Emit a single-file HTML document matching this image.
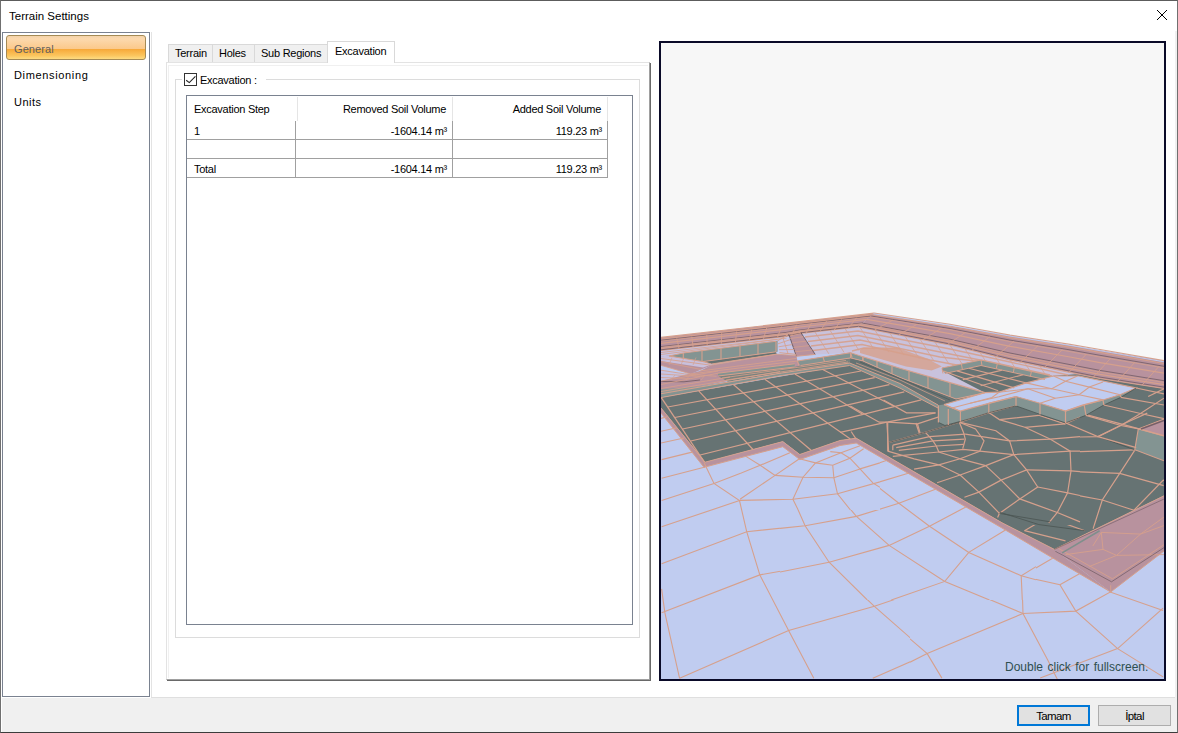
<!DOCTYPE html>
<html>
<head>
<meta charset="utf-8">
<title>Terrain Settings</title>
<style>
html,body{margin:0;padding:0;}
body{width:1178px;height:733px;overflow:hidden;background:#fff;font-family:"Liberation Sans",sans-serif;font-size:12px;color:#000;position:relative;}
.abs{position:absolute;}
#win{position:absolute;left:0;top:0;width:1176px;height:731px;border:1px solid #707070;border-top-color:#5c5c5c;border-bottom-color:#3c3c3c;background:#fff;}
#title{left:9px;top:8px;font-size:11.5px;line-height:16px;white-space:nowrap;}
#footer{left:2px;top:698px;width:1175px;height:34px;background:#f0f0f0;}
#leftpanel{left:2px;top:32px;width:146px;height:663px;border:1px solid #7a8290;background:#fff;}
#gen{left:6px;top:35px;width:138px;height:23px;border:1px solid #a58a55;border-radius:3px;background:linear-gradient(#f3d3aa 0%,#fcd9ae 12%,#fbc98a 56%,#f7a93a 58%,#fbc55e 85%,#fedc82 100%);}
.nav{font-size:11px;line-height:14px;white-space:nowrap;}
.tab{top:44px;height:18px;border:1px solid #d9d9d9;border-bottom:none;background:#f0f0f0;font-size:11px;letter-spacing:-0.25px;line-height:17px;white-space:nowrap;box-sizing:border-box;}
.btn{top:705px;height:21px;box-sizing:border-box;background:#e1e1e1;border:1px solid #adadad;text-align:center;line-height:21px;font-size:11.5px;letter-spacing:-0.6px;}
.cell{font-size:11px;letter-spacing:-0.27px;line-height:14px;white-space:nowrap;}
.hl{background:#e5e5e5;width:1px;top:97px;height:24px;}
.vl{background:#a0a0a0;width:1px;top:121px;height:57px;}
.gl{background:#a0a0a0;height:1px;left:187px;width:421px;}
.r{text-align:right;}
</style>
</head>
<body>
<div id="win"></div>
<div id="title" class="abs">Terrain Settings</div>
<svg class="abs" style="left:1156px;top:9px" width="12" height="12" viewBox="0 0 12 12"><path d="M1 1 L11 11 M11 1 L1 11" stroke="#000" stroke-width="1" fill="none"/></svg>

<div id="footer" class="abs"></div>
<div class="abs" style="left:151px;top:32px;width:1px;height:665px;background:#e3e3e3"></div>
<div class="abs" style="left:151px;top:697px;width:1024px;height:1px;background:#dfdfdf"></div>
<div class="abs" style="left:1175px;top:31px;width:2px;height:667px;background:#f0f0f0"></div>

<div id="leftpanel" class="abs"></div>
<div id="gen" class="abs"></div>
<div class="abs nav" style="left:14px;top:42px;color:#5f5f5f;letter-spacing:0.1px">General</div>
<div class="abs nav" style="left:14px;top:68px;letter-spacing:0.65px">Dimensioning</div>
<div class="abs nav" style="left:14px;top:95px;letter-spacing:0.5px">Units</div>

<!-- tab page -->
<div class="abs" style="left:166px;top:62px;width:484px;height:618px;box-sizing:border-box;border-top:1px solid #e3e3e3;border-left:1px solid #e3e3e3;border-right:1px solid #a0a0a0;border-bottom:1px solid #a0a0a0;box-shadow:1px 1px 0 #696969;background:#fff"></div>
<div class="abs" style="left:168px;top:65px;width:480px;height:613px;box-sizing:border-box;border-top:1px solid #f0f0f0;border-left:1px solid #f0f0f0;"></div>
<!-- tabs -->
<div class="abs tab" style="left:168px;width:45px;padding-left:6px;">Terrain</div>
<div class="abs tab" style="left:212px;width:43px;padding-left:6px;">Holes</div>
<div class="abs tab" style="left:254px;width:74px;padding-left:6px;">Sub Regions</div>
<div class="abs" style="left:327px;top:41px;width:68px;height:22px;box-sizing:border-box;border:1px solid #d9d9d9;border-bottom:none;background:#fff;line-height:19px;padding-left:7px;white-space:nowrap;font-size:11px;letter-spacing:-0.25px;">Excavation</div>

<!-- group box -->
<div class="abs" style="left:175px;top:79px;width:465px;height:559px;box-sizing:border-box;border:1px solid #dcdcdc;"></div>
<div class="abs" style="left:182px;top:72px;width:84px;height:16px;background:#fff"></div>
<div class="abs" style="left:184px;top:73px;width:13px;height:13px;box-sizing:border-box;border:1px solid #333;background:#fff"></div>
<svg class="abs" style="left:184px;top:73px" width="13" height="13" viewBox="0 0 13 13"><path d="M2.2 7.2 L5.3 9.6 L11.4 3.4" stroke="#222" stroke-width="1.1" fill="none"/></svg>
<div class="abs cell" style="left:200px;top:73px;">Excavation :</div>

<!-- list view -->
<div class="abs" style="left:186px;top:95px;width:447px;height:530px;box-sizing:border-box;border:1px solid #7a8290;background:#fff"></div>
<div id="lv">
<div class="abs hl" style="left:297px"></div><div class="abs hl" style="left:452px"></div><div class="abs hl" style="left:607px"></div>
<div class="abs vl" style="left:295px"></div><div class="abs vl" style="left:452px"></div><div class="abs vl" style="left:607px"></div>
<div class="abs gl" style="top:139px"></div><div class="abs gl" style="top:158px"></div><div class="abs gl" style="top:177px"></div>
<div class="abs cell" style="left:194px;top:102px">Excavation Step</div>
<div class="abs cell r" style="left:300px;width:146px;top:102px">Removed Soil Volume</div>
<div class="abs cell r" style="left:455px;width:146px;top:102px">Added Soil Volume</div>
<div class="abs cell" style="left:194px;top:124px">1</div>
<div class="abs cell r" style="left:300px;width:147px;top:124px">-1604.14 m³</div>
<div class="abs cell r" style="left:455px;width:147px;top:124px">119.23 m³</div>
<div class="abs cell" style="left:194px;top:162px">Total</div>
<div class="abs cell r" style="left:300px;width:147px;top:162px">-1604.14 m³</div>
<div class="abs cell r" style="left:455px;width:147px;top:162px">119.23 m³</div>
</div>

<!-- 3D view -->
<div class="abs" style="left:659px;top:41px;width:507px;height:640px;box-sizing:border-box;border:2px solid #0a0a28;background:#f7f7f7;" id="view"></div>
<!--SCENE--><svg class="abs" style="left:661px;top:43px" width="503" height="636" viewBox="661 43 503 636"><polygon points="661.0,337.4 874.0,313.2 1164.0,360.7 1164.0,679.0 661.0,679.0" fill="#c0ccf0"/><polygon points="661.0,337.4 874.0,313.2 858.0,327.0 800.0,333.5 786.5,336.4 661.0,350.5" fill="#b8929e"/><polygon points="874.0,313.2 1164.0,360.7 1164.0,388.5 1100.0,378.5 1070.0,372.5 1010.0,360.0 950.0,345.0 858.0,327.0" fill="#b8929e"/><polygon points="802.4,333.1 858.0,327.0 950.0,345.0 1010.0,360.0 1070.0,372.5 1079.0,376.0 1052.0,376.0 981.0,360.0 942.0,368.0 998.0,391.0 985.0,393.0 900.0,368.2 862.9,356.8 850.6,352.7 815.2,354.4" fill="#c9c2dc"/><polygon points="661.0,350.5 786.5,336.4 788.0,334.8 796.4,354.4 779.4,352.7 777.6,340.8 684.0,353.0 668.5,356.0 661.0,357.0" fill="#c6c4e4"/><polygon points="661.0,370.2 684.6,373.9 716.5,376.3 661.0,381.2" fill="#c6c4e4"/><polygon points="661.0,357.0 668.0,355.5 711.6,365.3 690.7,373.9 661.0,365.3" fill="#b8929e"/><polygon points="661.0,381.0 700.0,371.0 711.6,365.0 776.7,354.2 796.4,355.5 797.4,361.0 850.0,352.5 850.0,358.0 661.0,393.7" fill="#b8929e"/><polygon points="661.0,356.5 668.0,355.5 703.0,361.6 711.6,364.5 703.0,367.5 661.0,361.0" fill="#c9c0dc"/><polygon points="661.0,389.3 697.0,386.4 735.0,380.5 740.0,382.5 661.0,394.0" fill="#8e9a97"/><polyline points="661.0,381.5 684.0,381.8 700.0,380.0" fill="none" stroke="#5a4a50" stroke-width="0.9" opacity="0.7"/><polygon points="788.7,334.0 800.7,332.3 815.2,354.4 796.4,356.3" fill="#b8929e"/><polygon points="668.5,356.0 684.0,353.0 777.6,340.8 777.6,351.8 703.0,361.6" fill="#839492"/><polygon points="703.0,361.6 776.0,351.8 776.7,354.2 711.6,364.0" fill="#667373"/><polygon points="797.4,361.0 850.6,352.7 850.6,357.9 800.5,365.5" fill="#839492"/><polygon points="718.0,373.2 794.7,363.8 794.7,367.0 718.0,376.0" fill="#839492"/><polygon points="718.0,376.0 794.7,367.0 800.5,365.5 851.0,358.0 851.0,363.5 780.0,373.2 728.0,381.8" fill="#78837f"/><polyline points="722.0,378.0 846.0,360.5" fill="none" stroke="#d6a08c" stroke-width="1.0" opacity="0.8"/><polyline points="726.0,380.0 848.0,362.0" fill="none" stroke="#d6a08c" stroke-width="1.0" opacity="0.8"/><polygon points="860.0,350.0 863.0,348.0 901.0,349.0 926.5,358.2 941.8,366.4 931.6,370.5 906.0,366.4 860.0,353.0" fill="#d4a79c"/><polygon points="661.0,397.4 849.6,364.5 850.6,357.9 862.9,360.9 900.0,377.4 956.0,399.0 985.0,392.7 942.0,370.5 942.0,368.0 981.0,360.0 1052.0,376.0 1079.0,374.0 1100.0,378.5 1164.0,388.5 1164.0,495.8 1054.4,549.4 1002.0,522.8 856.2,438.2 840.0,440.5 799.8,454.5 782.8,441.6 705.0,462.2 661.0,408.0" fill="#667373"/><polygon points="661.0,393.7 780.0,373.2 847.5,363.0 849.6,363.0 849.6,365.5 780.0,375.8 661.0,397.6" fill="#839492"/><polygon points="850.6,352.7 862.9,356.8 862.9,360.9 850.6,357.9" fill="#839492"/><polygon points="862.9,356.8 900.0,368.2 984.9,392.7 956.0,399.0 900.0,377.4 862.9,360.9" fill="#839492"/><polygon points="849.6,363.0 900.0,383.5 938.0,405.0 938.0,408.0 900.0,388.1 849.6,365.5" fill="#839492"/><polygon points="942.0,368.0 981.0,360.0 981.0,365.5 945.0,373.5" fill="#839492"/><polygon points="981.0,360.0 1052.0,376.0 1045.0,379.5 981.0,365.5" fill="#839492"/><polygon points="944.0,404.5 984.9,392.7 999.0,392.2 1026.3,382.9 1053.5,376.0 1079.0,376.0 1136.2,388.0 1120.0,394.8 1103.0,400.0 1084.2,405.0 1065.5,411.0 1040.0,403.3 1016.0,396.5 988.8,403.3 970.0,408.4 960.4,411.2" fill="#c0ccf0"/><polygon points="938.4,405.3 944.0,404.5 960.4,411.2 960.4,421.4 945.0,425.5 938.4,422.4" fill="#839492"/><polygon points="960.4,411.2 970.0,408.4 988.8,403.3 1016.0,396.5 1016.0,405.9 988.8,412.7 970.0,418.7 960.4,421.4" fill="#839492"/><polygon points="1016.0,396.5 1040.0,403.3 1065.5,411.0 1065.5,422.9 1040.0,414.4 1016.0,405.9" fill="#839492"/><polygon points="1065.5,411.0 1084.2,405.0 1103.0,400.0 1120.0,394.8 1136.2,388.0 1120.9,397.3 1103.8,405.0 1086.0,415.3 1065.5,422.9" fill="#839492"/><polygon points="1138.3,428.9 1164.0,419.0 1164.0,436.0" fill="#b8929e"/><polygon points="1138.3,428.9 1164.0,436.0 1164.0,460.8 1134.8,449.7" fill="#839492"/><polygon points="1054.4,549.4 1164.0,495.8 1164.0,551.0 1110.7,592.0" fill="#b8929e"/><polygon points="661.0,408.0 705.0,462.2 782.8,441.6 799.8,454.5 840.0,440.5 856.2,438.2 1002.0,522.8 1054.4,549.4 1110.7,592.0 1110.7,592.0 1054.4,559.0 1002.0,528.0 856.2,443.0 840.0,445.5 799.8,459.5 782.8,446.7 704.0,467.3 661.0,413.0" fill="#b8929e"/><polyline points="661.0,408.0 705.0,462.2 782.8,441.6 799.8,454.5 840.0,440.5 856.2,438.2 1002.0,522.8 1054.4,549.4 1164.0,495.8" fill="none" stroke="#d6a08c" stroke-width="1"/><polyline points="661.0,413.0 704.0,467.3 782.8,446.7 799.8,459.5 840.0,445.5 856.2,443.0 1002.0,528.0 1054.4,559.0 1110.7,592.0" fill="none" stroke="#d6a08c" stroke-width="1"/><polyline points="667.7,407.0 861.0,371.0" fill="none" stroke="#d6a08c" stroke-width="1.2"/><polyline points="674.8,417.5 874.7,377.6" fill="none" stroke="#d6a08c" stroke-width="1.2"/><polyline points="682.6,429.0 889.4,384.6" fill="none" stroke="#d6a08c" stroke-width="1.2"/><polyline points="690.7,441.0 904.3,391.8" fill="none" stroke="#d6a08c" stroke-width="1.2"/><polyline points="700.1,455.0 921.2,399.9" fill="none" stroke="#d6a08c" stroke-width="1.2"/><polyline points="661.2,397.4 704.6,462.3" fill="none" stroke="#d6a08c" stroke-width="1.2"/><polyline points="698.7,390.9 753.0,449.5" fill="none" stroke="#d6a08c" stroke-width="1.2"/><polyline points="733.6,384.8 811.4,450.5" fill="none" stroke="#d6a08c" stroke-width="1.2"/><polyline points="764.8,379.3 850.4,439.0" fill="none" stroke="#d6a08c" stroke-width="1.2"/><polyline points="794.8,374.1 863.0,414.4" fill="none" stroke="#d6a08c" stroke-width="1.2"/><polyline points="822.2,369.3 894.5,406.5" fill="none" stroke="#d6a08c" stroke-width="1.2"/><clipPath id="cA"><path clip-rule="evenodd" d="M661,400H780V600H910V680H661Z M740,435H780V510H740Z"/></clipPath><clipPath id="cB"><rect x="1036" y="430" width="130" height="250"/><rect x="910" y="600" width="126" height="80"/></clipPath><clipPath id="cC"><path clip-rule="evenodd" d="M780,430H1036V600H780Z M780,435H880V510H780Z"/></clipPath><clipPath id="cN"><rect x="740" y="435" width="140" height="75"/></clipPath><g clip-path="url(#cN)"><polyline points="799.4,458.8 815.5,462.9 832.7,465.3 849.9,458.2 863.6,448.7" fill="none" stroke="#d6a08c" stroke-width="1.1"/><polyline points="860.0,468.9 880.0,462.9" fill="none" stroke="#d6a08c" stroke-width="1.1"/><polyline points="815.5,462.9 830.3,457.0 841.0,452.8 860.0,445.7" fill="none" stroke="#d6a08c" stroke-width="1.1"/><polyline points="830.3,451.6 841.0,452.8 849.9,458.2 860.0,468.9 873.1,483.1 880.0,487.3" fill="none" stroke="#d6a08c" stroke-width="1.1"/><polyline points="799.4,458.8 775.1,475.4 740.0,499.2" fill="none" stroke="#d6a08c" stroke-width="1.1"/><polyline points="745.9,456.4 760.2,465.3 775.1,475.4 803.0,477.2 833.9,477.8 860.0,468.9" fill="none" stroke="#d6a08c" stroke-width="1.1"/><polyline points="760.2,465.3 789.9,452.8" fill="none" stroke="#d6a08c" stroke-width="1.1"/><polyline points="740.0,473.6 760.2,465.3" fill="none" stroke="#d6a08c" stroke-width="1.1"/><polyline points="815.5,462.9 803.0,477.2 792.9,499.2 798.2,510.0" fill="none" stroke="#d6a08c" stroke-width="1.1"/><polyline points="832.7,465.3 833.9,477.8 837.5,493.8 850.5,510.0" fill="none" stroke="#d6a08c" stroke-width="1.1"/><polyline points="740.0,500.4 792.9,499.2 837.5,493.8 880.0,481.9" fill="none" stroke="#d6a08c" stroke-width="1.1"/><polyline points="714.0,483.5 739.5,500.6 746.7,531.7" fill="none" stroke="#d6a08c" stroke-width="1.1"/></g><g clip-path="url(#cA)"><polyline points="661.6,459.6 691.1,452.4 692.6,452.1" fill="none" stroke="#d6a08c" stroke-width="1.1"/><polyline points="661.0,418.4 667.0,416.7" fill="none" stroke="#d6a08c" stroke-width="1.1"/><polyline points="661.0,431.2 677.0,427.7" fill="none" stroke="#d6a08c" stroke-width="1.1"/><polyline points="661.0,443.0 684.0,438.0" fill="none" stroke="#d6a08c" stroke-width="1.1"/><polyline points="661.6,478.3 704.2,467.2 704.8,467.0" fill="none" stroke="#d6a08c" stroke-width="1.1"/><polyline points="661.6,500.6 714.0,483.5 754.9,467.8 786.0,453.7 789.9,452.0" fill="none" stroke="#d6a08c" stroke-width="1.1"/><polyline points="661.6,526.7 739.5,500.6 774.6,474.4 800.8,458.7" fill="none" stroke="#d6a08c" stroke-width="1.1"/><polyline points="739.5,500.6 793.6,498.9 838.4,494.0 885.9,480.9 916.0,471.1" fill="none" stroke="#d6a08c" stroke-width="1.1"/><polyline points="661.6,563.7 746.7,531.7 804.0,525.8 856.4,515.9 902.2,502.2 916.0,497.3" fill="none" stroke="#d6a08c" stroke-width="1.1"/><polyline points="661.6,612.8 759.8,574.9 828.6,562.7 889.1,544.7 916.0,534.9" fill="none" stroke="#d6a08c" stroke-width="1.1"/><polyline points="679.6,678.3 788.6,630.5 874.4,606.3 916.0,592.2" fill="none" stroke="#d6a08c" stroke-width="1.1"/><polyline points="872.8,678.3 916.0,659.3" fill="none" stroke="#d6a08c" stroke-width="1.1"/><polyline points="661.6,588.9 664.9,612.8 679.6,678.3" fill="none" stroke="#d6a08c" stroke-width="1.1"/><polyline points="704.2,462.9 714.0,483.5 739.5,500.6 746.7,531.7 759.8,574.9 788.6,630.5 813.8,678.3" fill="none" stroke="#d6a08c" stroke-width="1.1"/><polyline points="746.7,456.4 774.6,474.4 803.0,477.6 832.5,477.6 859.7,467.8 885.9,456.4" fill="none" stroke="#d6a08c" stroke-width="1.1"/><polyline points="830.2,451.5 815.5,462.9 803.0,477.6 793.6,498.9 804.0,525.8 828.6,562.7 874.4,606.3 916.0,642.9" fill="none" stroke="#d6a08c" stroke-width="1.1"/><polyline points="856.4,444.9 833.5,464.5 832.5,477.6 838.4,494.0 856.4,515.9 889.1,544.7 916.0,566.0" fill="none" stroke="#d6a08c" stroke-width="1.1"/><polyline points="815.5,462.9 833.5,464.5 849.9,458.0" fill="none" stroke="#d6a08c" stroke-width="1.1"/><polyline points="860.3,469.5 900.6,500.6 916.0,513.6" fill="none" stroke="#d6a08c" stroke-width="1.1"/></g><g clip-path="url(#cB)"><polyline points="910.0,511.1 929.7,525.8 969.0,552.1 1021.8,576.2 1059.9,584.8 1075.8,611.1 1117.6,648.6 1163.1,676.9" fill="none" stroke="#d6a08c" stroke-width="1.1"/><polyline points="910.0,535.6 929.7,525.8 964.1,508.6 970.2,504.9" fill="none" stroke="#d6a08c" stroke-width="1.1"/><polyline points="969.0,552.1 1003.4,531.9" fill="none" stroke="#d6a08c" stroke-width="1.1"/><polyline points="910.0,557.7 945.6,581.1 969.0,552.1" fill="none" stroke="#d6a08c" stroke-width="1.1"/><polyline points="910.0,593.4 945.6,581.1 1023.0,613.5 1075.8,611.1 1110.2,592.1 1163.1,610.6" fill="none" stroke="#d6a08c" stroke-width="1.1"/><polyline points="1021.8,576.2 1051.3,559.0 1052.8,558.1" fill="none" stroke="#d6a08c" stroke-width="1.1"/><polyline points="1021.8,576.2 1023.0,613.5 1047.6,659.7 1057.4,679.4" fill="none" stroke="#d6a08c" stroke-width="1.1"/><polyline points="1059.9,584.8 1079.5,573.7" fill="none" stroke="#d6a08c" stroke-width="1.1"/><polyline points="1117.6,648.6 1163.1,608.1" fill="none" stroke="#d6a08c" stroke-width="1.1"/><polyline points="910.0,662.2 927.2,653.6 1023.0,613.5" fill="none" stroke="#d6a08c" stroke-width="1.1"/><polyline points="910.0,638.8 927.2,653.6 941.9,678.1" fill="none" stroke="#d6a08c" stroke-width="1.1"/><polyline points="1117.6,648.6 1040.2,678.1" fill="none" stroke="#d6a08c" stroke-width="1.1"/></g><g clip-path="url(#cC)"><polyline points="780.0,476.0 802.9,477.1 833.5,478.2 860.8,469.5 882.6,461.8 886.3,460.5" fill="none" stroke="#d6a08c" stroke-width="1.1"/><polyline points="780.0,498.9 793.1,498.5 837.2,493.5 873.8,483.6 906.6,473.8 908.2,473.3" fill="none" stroke="#d6a08c" stroke-width="1.1"/><polyline points="780.0,528.4 805.1,525.8 856.4,516.4 898.9,503.3 932.8,490.2 935.4,489.2" fill="none" stroke="#d6a08c" stroke-width="1.1"/><polyline points="780.0,572.0 829.1,562.2 889.1,545.4 929.5,526.2 964.4,507.7 965.8,506.9" fill="none" stroke="#d6a08c" stroke-width="1.1"/><polyline points="891.3,600.0 944.8,581.4 968.8,552.4 1002.6,531.7 1005.4,530.0" fill="none" stroke="#d6a08c" stroke-width="1.1"/><polyline points="1036.0,566.6 1021.2,575.7 1022.3,600.0" fill="none" stroke="#d6a08c" stroke-width="1.1"/><polyline points="799.6,458.6 816.0,462.9 802.9,477.1 793.1,498.5 805.1,525.8 829.1,562.2 867.3,600.0" fill="none" stroke="#d6a08c" stroke-width="1.1"/><polyline points="834.6,453.1 833.5,465.8 833.5,478.2 837.2,493.5 856.4,516.4 889.1,545.4 944.8,581.4 989.5,600.0" fill="none" stroke="#d6a08c" stroke-width="1.1"/><polyline points="858.6,448.7 852.0,457.5 860.8,469.5 873.8,483.6 898.9,503.3 929.5,526.2 968.8,552.4 1021.2,575.7 1036.0,579.7" fill="none" stroke="#d6a08c" stroke-width="1.1"/><polyline points="816.0,462.9 833.5,465.8 852.0,457.5" fill="none" stroke="#d6a08c" stroke-width="1.1"/><polyline points="780.0,470.6 799.6,458.6" fill="none" stroke="#d6a08c" stroke-width="1.1"/><polyline points="816.0,462.9 826.9,454.2" fill="none" stroke="#d6a08c" stroke-width="1.1"/></g><polyline points="888.5,442.6 925.2,432.4 959.3,422.2" fill="none" stroke="#d6a08c" stroke-width="1.2"/><polyline points="892.8,445.2 929.4,436.7 965.3,434.1" fill="none" stroke="#d6a08c" stroke-width="1.2"/><polyline points="896.2,447.7 932.9,440.9 964.4,439.2" fill="none" stroke="#d6a08c" stroke-width="1.2"/><polyline points="898.8,450.3 936.3,446.0 963.5,444.3" fill="none" stroke="#d6a08c" stroke-width="1.2"/><polyline points="892.8,456.3 938.8,452.0 963.5,449.4 979.7,451.2 1013.8,454.6 1070.1,451.2 1080.0,451.2" fill="none" stroke="#d6a08c" stroke-width="1.2"/><polyline points="959.3,422.2 963.5,432.4 965.3,439.2 963.5,446.0 962.7,448.6" fill="none" stroke="#d6a08c" stroke-width="1.2"/><polyline points="959.3,422.2 975.5,429.0 984.0,440.9 979.7,451.2 960.1,458.8 938.8,464.8 914.1,469.1" fill="none" stroke="#d6a08c" stroke-width="1.2"/><polyline points="959.3,422.2 995.9,430.7 1009.6,440.9 1013.8,454.6 985.7,465.6 960.1,475.0 937.1,482.7" fill="none" stroke="#d6a08c" stroke-width="1.2"/><polyline points="959.3,422.2 989.1,412.8 1014.7,406.0" fill="none" stroke="#d6a08c" stroke-width="1.2"/><polyline points="989.1,412.8 999.4,419.6 1024.9,427.3 1050.5,439.2 1070.1,451.2 1071.0,470.8 1067.6,492.9 1057.3,512.5 1048.8,522.8" fill="none" stroke="#d6a08c" stroke-width="1.2"/><polyline points="999.4,419.6 1038.6,415.3 1065.0,423.9" fill="none" stroke="#d6a08c" stroke-width="1.2"/><polyline points="1024.9,427.3 1065.0,423.9 1080.0,417.1" fill="none" stroke="#d6a08c" stroke-width="1.2"/><polyline points="965.3,434.1 1009.6,440.9 1050.5,439.2 1080.0,436.7" fill="none" stroke="#d6a08c" stroke-width="1.2"/><polyline points="1013.8,454.6 1026.6,469.9 1037.7,487.0 1019.8,498.9 999.4,513.4 997.6,517.6" fill="none" stroke="#d6a08c" stroke-width="1.2"/><polyline points="1026.6,469.9 1071.0,470.8 1080.0,471.6" fill="none" stroke="#d6a08c" stroke-width="1.2"/><polyline points="1037.7,487.0 1067.6,492.9 1080.0,495.5" fill="none" stroke="#d6a08c" stroke-width="1.2"/><polyline points="985.7,465.6 1001.1,480.1 1019.8,498.9 1057.3,512.5 1080.0,521.9" fill="none" stroke="#d6a08c" stroke-width="1.2"/><polyline points="960.1,475.0 978.9,492.1 999.4,513.4" fill="none" stroke="#d6a08c" stroke-width="1.2"/><polyline points="1026.6,469.9 1001.1,480.1 978.9,492.1 964.4,497.2" fill="none" stroke="#d6a08c" stroke-width="1.2"/><polyline points="960.1,458.8 985.7,465.6" fill="none" stroke="#d6a08c" stroke-width="1.2"/><polyline points="887.7,451.2 914.1,458.8 938.8,464.8 960.1,475.0" fill="none" stroke="#d6a08c" stroke-width="1.2"/><polyline points="925.2,432.4 929.4,436.7 932.9,440.9 936.3,446.0 938.8,452.0 960.1,458.8" fill="none" stroke="#d6a08c" stroke-width="1.2"/><polyline points="887.7,422.2 917.5,423.9 938.0,417.1" fill="none" stroke="#d6a08c" stroke-width="1.2"/><polyline points="917.5,423.9 920.1,433.2" fill="none" stroke="#d6a08c" stroke-width="1.2"/><polyline points="887.7,422.2 887.7,451.2" fill="none" stroke="#d6a08c" stroke-width="1.2"/><polyline points="892.8,445.2 892.8,450.3" fill="none" stroke="#d6a08c" stroke-width="1.2"/><polyline points="888.5,442.6 925.2,432.4 959.3,422.2" fill="none" stroke="#4a5452" stroke-width="0.8"/><polyline points="999.4,513.4 1050.5,521.9" fill="none" stroke="#4a5452" stroke-width="0.8"/><clipPath id="cE"><rect x="1080" y="400" width="90" height="160"/><rect x="1000" y="525" width="80" height="40"/></clipPath><g clip-path="url(#cE)"><polyline points="1051.1,437.6 1071.6,451.9 1068.5,493.9 1050.1,518.4 1038.9,524.6" fill="none" stroke="#d6a08c" stroke-width="1.2"/><polyline points="1050.1,437.6 1098.2,436.6 1122.7,424.3 1147.3,413.1" fill="none" stroke="#d6a08c" stroke-width="1.2"/><polyline points="1011.3,448.9 1026.6,469.3 1037.8,486.7 1019.4,499.0 1000.0,512.3" fill="none" stroke="#d6a08c" stroke-width="1.2"/><polyline points="1071.6,451.9 1134.0,449.9" fill="none" stroke="#d6a08c" stroke-width="1.2"/><polyline points="1070.6,471.4 1119.7,473.4 1163.7,485.7" fill="none" stroke="#d6a08c" stroke-width="1.2"/><polyline points="1037.8,486.7 1068.5,493.9 1102.3,500.0 1134.0,510.2" fill="none" stroke="#d6a08c" stroke-width="1.2"/><polyline points="1135.0,449.9 1119.7,473.4 1102.3,500.0 1093.1,528.7" fill="none" stroke="#d6a08c" stroke-width="1.2"/><polyline points="1019.4,499.0 1050.1,518.4 1084.9,530.7" fill="none" stroke="#d6a08c" stroke-width="1.2"/><polyline points="1000.0,480.6 1019.4,499.0" fill="none" stroke="#d6a08c" stroke-width="1.2"/><polyline points="1088.0,415.1 1122.7,424.3 1163.7,435.6" fill="none" stroke="#d6a08c" stroke-width="1.2"/><polyline points="1163.7,479.6 1134.0,510.2" fill="none" stroke="#d6a08c" stroke-width="1.2"/><polyline points="1024.5,530.7 1065.5,540.9" fill="none" stroke="#d6a08c" stroke-width="1.2"/><polyline points="1024.5,530.7 1041.9,520.5" fill="none" stroke="#d6a08c" stroke-width="1.2"/></g><polyline points="1000.0,512.3 1038.9,524.6 1084.9,530.7" fill="none" stroke="#4a5452" stroke-width="0.8"/><polyline points="1065.5,423.3 1098.2,436.6 1135.0,449.9" fill="none" stroke="#4a5452" stroke-width="0.8"/><polyline points="840.0,432.4 886.9,422.2 935.5,412.8" fill="none" stroke="#d6a08c" stroke-width="1.2"/><polyline points="886.9,422.2 888.6,451.2" fill="none" stroke="#d6a08c" stroke-width="1.2"/><polyline points="850.2,406.0 879.2,422.2 886.9,422.2" fill="none" stroke="#d6a08c" stroke-width="1.2"/><polyline points="883.5,400.0 906.5,412.8 935.5,412.8" fill="none" stroke="#d6a08c" stroke-width="1.2"/><polyline points="851.1,431.5 856.2,439.2" fill="none" stroke="#d6a08c" stroke-width="1.2"/><polyline points="915.9,423.0 919.3,433.2" fill="none" stroke="#d6a08c" stroke-width="1.2"/><polyline points="661.0,337.4 786.5,323.2 800.0,321.7 874.0,313.2" fill="none" stroke="#d6a08c" stroke-width="1.2"/><polyline points="661.0,339.0 786.5,324.8 800.0,323.1 872.1,314.9" fill="none" stroke="#d6a08c" stroke-width="1.2"/><polyline points="661.0,343.3 786.5,329.1 800.0,327.0 866.8,319.4" fill="none" stroke="#d6a08c" stroke-width="1.2"/><polyline points="661.0,348.5 786.5,334.4 800.0,331.7 860.4,324.9" fill="none" stroke="#d6a08c" stroke-width="1.2"/><polyline points="661.0,350.5 786.5,336.4 800.0,333.5 858.0,327.0" fill="none" stroke="#d6a08c" stroke-width="1.2"/><polyline points="661.0,340.3 786.5,326.1 800.0,324.3 870.5,316.2" fill="none" stroke="#5a4a50" stroke-width="0.8" opacity="0.75"/><polyline points="661.0,346.6 786.5,332.4 800.0,330.0 862.8,322.9" fill="none" stroke="#5a4a50" stroke-width="0.8" opacity="0.75"/><polyline points="661.0,349.8 786.5,335.7 800.0,332.9 858.8,326.3" fill="none" stroke="#5a4a50" stroke-width="0.8" opacity="0.75"/><polyline points="661.0,341.1 786.5,326.9 800.0,325.0 869.5,317.1" fill="none" stroke="#d6a08c" stroke-width="1.0" opacity="0.8"/><polyline points="661.0,347.4 786.5,333.2 800.0,330.7 861.8,323.7" fill="none" stroke="#d6a08c" stroke-width="1.0" opacity="0.8"/><polyline points="676.8,338.3 679.1,348.8" fill="none" stroke="#d6a08c" stroke-width="1.0" opacity="0.85"/><polyline points="691.8,336.6 693.1,347.1" fill="none" stroke="#d6a08c" stroke-width="1.0" opacity="0.85"/><polyline points="706.8,334.9 707.2,345.5" fill="none" stroke="#d6a08c" stroke-width="1.0" opacity="0.85"/><polyline points="721.7,333.1 721.3,343.8" fill="none" stroke="#d6a08c" stroke-width="1.0" opacity="0.85"/><polyline points="736.7,331.4 735.4,342.1" fill="none" stroke="#d6a08c" stroke-width="1.0" opacity="0.85"/><polyline points="751.7,329.7 749.4,340.4" fill="none" stroke="#d6a08c" stroke-width="1.0" opacity="0.85"/><polyline points="766.7,328.0 763.5,338.8" fill="none" stroke="#d6a08c" stroke-width="1.0" opacity="0.85"/><polyline points="781.7,326.3 777.6,337.1" fill="none" stroke="#d6a08c" stroke-width="1.0" opacity="0.85"/><polyline points="796.7,324.6 791.6,335.4" fill="none" stroke="#d6a08c" stroke-width="1.0" opacity="0.85"/><polyline points="811.7,322.8 805.7,333.7" fill="none" stroke="#d6a08c" stroke-width="1.0" opacity="0.85"/><polyline points="826.6,321.1 819.8,332.0" fill="none" stroke="#d6a08c" stroke-width="1.0" opacity="0.85"/><polyline points="841.6,319.4 833.9,330.4" fill="none" stroke="#d6a08c" stroke-width="1.0" opacity="0.85"/><polyline points="856.6,317.7 847.9,328.7" fill="none" stroke="#d6a08c" stroke-width="1.0" opacity="0.85"/><polyline points="874.0,313.2 950.0,324.4 1010.0,335.1 1070.0,344.3 1100.0,349.5 1164.0,360.7" fill="none" stroke="#d6a08c" stroke-width="1.2"/><polyline points="872.4,314.6 950.0,326.5 1010.0,337.6 1070.0,347.1 1100.0,352.4 1164.0,363.5" fill="none" stroke="#d6a08c" stroke-width="1.2"/><polyline points="866.8,319.4 950.0,333.7 1010.0,346.3 1070.0,357.0 1100.0,362.6 1164.0,373.2" fill="none" stroke="#d6a08c" stroke-width="1.2"/><polyline points="860.2,325.1 950.0,342.1 1010.0,356.5 1070.0,368.6 1100.0,374.4 1164.0,384.6" fill="none" stroke="#d6a08c" stroke-width="1.2"/><polyline points="858.0,327.0 950.0,345.0 1010.0,360.0 1070.0,372.5 1100.0,378.5 1164.0,388.5" fill="none" stroke="#d6a08c" stroke-width="1.2"/><polyline points="870.8,316.0 950.0,328.5 1010.0,340.1 1070.0,349.9 1100.0,355.3 1164.0,366.3" fill="none" stroke="#5a4a50" stroke-width="0.8" opacity="0.75"/><polyline points="862.5,323.1 950.0,339.2 1010.0,353.0 1070.0,364.6 1100.0,370.4 1164.0,380.7" fill="none" stroke="#5a4a50" stroke-width="0.8" opacity="0.75"/><polyline points="858.8,326.3 950.0,344.0 1010.0,358.8 1070.0,371.1 1100.0,377.1 1164.0,387.1" fill="none" stroke="#5a4a50" stroke-width="0.8" opacity="0.75"/><polyline points="869.8,316.8 950.0,329.8 1010.0,341.6 1070.0,351.6 1100.0,357.0 1164.0,367.9" fill="none" stroke="#d6a08c" stroke-width="1.0" opacity="0.8"/><polyline points="861.5,324.0 950.0,340.5 1010.0,354.5 1070.0,366.3 1100.0,372.1 1164.0,382.4" fill="none" stroke="#d6a08c" stroke-width="1.0" opacity="0.8"/><polyline points="873.4,313.8 950.0,325.2 1010.0,336.1 1070.0,345.4 1100.0,350.7 1164.0,361.8" fill="none" stroke="#c0ccf0" stroke-width="1.0" opacity="0.9"/><polyline points="892.9,320.0 874.3,330.2" fill="none" stroke="#d6a08c" stroke-width="1.0" opacity="0.85"/><polyline points="917.1,324.2 898.7,335.0" fill="none" stroke="#d6a08c" stroke-width="1.0" opacity="0.85"/><polyline points="941.3,328.3 923.0,339.7" fill="none" stroke="#d6a08c" stroke-width="1.0" opacity="0.85"/><polyline points="965.5,332.4 947.3,344.5" fill="none" stroke="#d6a08c" stroke-width="1.0" opacity="0.85"/><polyline points="989.7,336.8 971.7,350.4" fill="none" stroke="#d6a08c" stroke-width="1.0" opacity="0.85"/><polyline points="1013.9,341.3 996.0,356.5" fill="none" stroke="#d6a08c" stroke-width="1.0" opacity="0.85"/><polyline points="1038.1,345.6 1020.3,362.2" fill="none" stroke="#d6a08c" stroke-width="1.0" opacity="0.85"/><polyline points="1062.3,349.8 1044.7,367.2" fill="none" stroke="#d6a08c" stroke-width="1.0" opacity="0.85"/><polyline points="1086.5,354.0 1069.0,372.3" fill="none" stroke="#d6a08c" stroke-width="1.0" opacity="0.85"/><polyline points="1110.8,358.1 1093.3,377.2" fill="none" stroke="#d6a08c" stroke-width="1.0" opacity="0.85"/><polyline points="1135.0,362.1 1117.7,381.3" fill="none" stroke="#d6a08c" stroke-width="1.0" opacity="0.85"/><polyline points="1159.2,366.1 1142.0,385.1" fill="none" stroke="#d6a08c" stroke-width="1.0" opacity="0.85"/><clipPath id="cM"><polygon points="802.4,333.1 858.0,327.0 950.0,345.0 1010.0,360.0 1070.0,372.5 1079.0,376.0 1052.0,376.0 981.0,360.0 942.0,368.0 935.5,370.6 913.3,368.1 900.0,368.2 862.9,356.8 850.6,352.7 815.2,354.4"/></clipPath><g clip-path="url(#cM)"><polyline points="805.0,337.0 858.0,331.0 950.0,349.0 1010.0,362.0 1068.0,375.0" fill="none" stroke="#d6a08c" stroke-width="1.3" opacity="0.9"/><polyline points="808.0,341.5 858.0,335.5 945.0,353.0 1000.0,364.0 1050.0,375.0" fill="none" stroke="#d6a08c" stroke-width="1.3" opacity="0.9"/><polyline points="811.0,346.0 860.0,340.0 940.0,357.0 985.0,362.0" fill="none" stroke="#d6a08c" stroke-width="1.3" opacity="0.9"/><polyline points="813.0,350.5 862.0,344.5 930.0,360.0 962.0,366.0" fill="none" stroke="#d6a08c" stroke-width="1.3" opacity="0.9"/><polyline points="852.0,351.0 864.0,348.0 900.0,348.5" fill="none" stroke="#d6a08c" stroke-width="1.3" opacity="0.9"/><polyline points="815.0,332.1 829.0,354.1" fill="none" stroke="#d6a08c" stroke-width="1.0" opacity="0.75"/><polyline points="830.0,330.3 844.0,352.3" fill="none" stroke="#d6a08c" stroke-width="1.0" opacity="0.75"/><polyline points="845.0,328.5 859.0,350.5" fill="none" stroke="#d6a08c" stroke-width="1.0" opacity="0.75"/><polyline points="860.0,327.4 874.0,349.4" fill="none" stroke="#d6a08c" stroke-width="1.0" opacity="0.75"/><polyline points="875.0,330.3 889.0,352.3" fill="none" stroke="#d6a08c" stroke-width="1.0" opacity="0.75"/><polyline points="890.0,333.3 904.0,355.3" fill="none" stroke="#d6a08c" stroke-width="1.0" opacity="0.75"/><polyline points="905.0,336.2 919.0,358.2" fill="none" stroke="#d6a08c" stroke-width="1.0" opacity="0.75"/><polyline points="920.0,339.1 934.0,361.1" fill="none" stroke="#d6a08c" stroke-width="1.0" opacity="0.75"/><polyline points="935.0,342.1 949.0,364.1" fill="none" stroke="#d6a08c" stroke-width="1.0" opacity="0.75"/><polyline points="950.0,345.0 964.0,367.0" fill="none" stroke="#d6a08c" stroke-width="1.0" opacity="0.75"/><polyline points="965.0,348.8 979.0,370.8" fill="none" stroke="#d6a08c" stroke-width="1.0" opacity="0.75"/><polyline points="980.0,352.5 994.0,374.5" fill="none" stroke="#d6a08c" stroke-width="1.0" opacity="0.75"/><polyline points="995.0,356.2 1009.0,378.2" fill="none" stroke="#d6a08c" stroke-width="1.0" opacity="0.75"/><polyline points="1010.0,360.0 1024.0,382.0" fill="none" stroke="#d6a08c" stroke-width="1.0" opacity="0.75"/><polyline points="1025.0,363.1 1039.0,385.1" fill="none" stroke="#d6a08c" stroke-width="1.0" opacity="0.75"/><polyline points="1040.0,366.2 1054.0,388.2" fill="none" stroke="#d6a08c" stroke-width="1.0" opacity="0.75"/></g><polyline points="862.9,356.8 900.0,368.2 984.9,392.7" fill="none" stroke="#d6a08c" stroke-width="1.2"/><polyline points="862.9,360.9 900.0,377.4 956.0,399.0" fill="none" stroke="#d6a08c" stroke-width="1.0"/><polyline points="862.9,356.8 862.9,360.9" fill="none" stroke="#d6a08c" stroke-width="1.1"/><polyline points="877.0,361.1 877.0,367.2" fill="none" stroke="#d6a08c" stroke-width="1.1"/><polyline points="892.0,365.7 892.0,373.8" fill="none" stroke="#d6a08c" stroke-width="1.1"/><polyline points="909.0,370.8 909.0,380.9" fill="none" stroke="#d6a08c" stroke-width="1.1"/><polyline points="928.0,376.3 928.0,388.2" fill="none" stroke="#d6a08c" stroke-width="1.1"/><polyline points="950.0,382.6 950.0,396.7" fill="none" stroke="#d6a08c" stroke-width="1.1"/><polyline points="956.0,399.0 984.9,392.7" fill="none" stroke="#d6a08c" stroke-width="1.1"/><polyline points="849.6,363.0 900.0,383.5 938.0,405.0" fill="none" stroke="#d6a08c" stroke-width="1.0"/><polyline points="849.6,365.5 900.0,388.1 938.0,408.0" fill="none" stroke="#d6a08c" stroke-width="1.0"/><polyline points="856.0,363.0 900.0,380.0 945.0,401.0" fill="none" stroke="#d6a08c" stroke-width="0.9" opacity="0.8"/><polyline points="860.0,362.0 900.0,378.5 950.0,400.0" fill="none" stroke="#4a5452" stroke-width="0.7" opacity="0.8"/><polyline points="661.0,393.7 780.0,373.2 849.6,363.0" fill="none" stroke="#d6a08c" stroke-width="1.1"/><polyline points="661.0,397.6 780.0,375.8 849.6,365.5" fill="none" stroke="#d6a08c" stroke-width="1.0"/><polyline points="850.6,352.7 862.9,356.8 862.9,360.9 850.6,357.9 850.6,352.7" fill="none" stroke="#d6a08c" stroke-width="1.0"/><polyline points="797.4,361.0 850.6,352.7" fill="none" stroke="#d6a08c" stroke-width="1.1"/><polyline points="800.5,365.5 850.6,357.9" fill="none" stroke="#d6a08c" stroke-width="1.0"/><polyline points="797.4,361.0 798.9,365.7" fill="none" stroke="#d6a08c" stroke-width="1.1"/><polyline points="823.0,357.0 824.5,361.8" fill="none" stroke="#d6a08c" stroke-width="1.1"/><polyline points="850.6,352.7 852.1,357.7" fill="none" stroke="#d6a08c" stroke-width="1.1"/><polyline points="669.2,356.0 683.3,353.0 776.0,341.3" fill="none" stroke="#d6a08c" stroke-width="1.1"/><polyline points="669.2,356.0 703.0,361.6 776.0,351.8" fill="none" stroke="#d6a08c" stroke-width="1.0"/><polyline points="683.3,353.0 683.3,358.3" fill="none" stroke="#d6a08c" stroke-width="1.1"/><polyline points="702.0,350.6 702.0,361.4" fill="none" stroke="#d6a08c" stroke-width="1.1"/><polyline points="721.0,348.2 721.0,359.2" fill="none" stroke="#d6a08c" stroke-width="1.1"/><polyline points="740.0,345.8 740.0,356.6" fill="none" stroke="#d6a08c" stroke-width="1.1"/><polyline points="758.0,343.6 758.0,354.2" fill="none" stroke="#d6a08c" stroke-width="1.1"/><polyline points="776.0,341.3 776.0,351.8" fill="none" stroke="#d6a08c" stroke-width="1.1"/><polyline points="703.0,361.6 711.6,364.0 776.7,354.2" fill="none" stroke="#d6a08c" stroke-width="1.0"/><polyline points="788.7,334.0 796.4,356.3" fill="none" stroke="#5a4a50" stroke-width="1.0" opacity="0.8"/><polyline points="800.7,332.3 815.2,354.4" fill="none" stroke="#5a4a50" stroke-width="1.0" opacity="0.8"/><polyline points="788.7,334.0 800.7,332.3" fill="none" stroke="#d6a08c" stroke-width="1.0"/><polyline points="796.4,356.3 815.2,354.4" fill="none" stroke="#d6a08c" stroke-width="1.0"/><polyline points="790.2,338.5 803.6,336.7" fill="none" stroke="#d6a08c" stroke-width="0.9" opacity="0.8"/><polyline points="791.8,342.9 806.5,341.1" fill="none" stroke="#d6a08c" stroke-width="0.9" opacity="0.8"/><polyline points="793.3,347.4 809.4,345.6" fill="none" stroke="#d6a08c" stroke-width="0.9" opacity="0.8"/><polyline points="794.9,351.8 812.3,350.0" fill="none" stroke="#d6a08c" stroke-width="0.9" opacity="0.8"/><polyline points="718.0,373.2 794.7,363.8" fill="none" stroke="#d6a08c" stroke-width="1.0"/><polyline points="718.0,376.0 794.7,367.0" fill="none" stroke="#d6a08c" stroke-width="1.0"/><polyline points="942.0,368.0 981.0,360.0 1052.0,376.0" fill="none" stroke="#d6a08c" stroke-width="1.2"/><polyline points="945.0,373.5 981.0,365.5 1045.0,379.5" fill="none" stroke="#d6a08c" stroke-width="1.0"/><polyline points="942.0,368.0 943.0,373.5" fill="none" stroke="#d6a08c" stroke-width="1.0"/><polyline points="961.4,364.0 962.4,369.5" fill="none" stroke="#d6a08c" stroke-width="1.0"/><polyline points="981.0,360.0 982.0,365.5" fill="none" stroke="#d6a08c" stroke-width="1.0"/><polyline points="997.3,363.7 996.3,368.7" fill="none" stroke="#d6a08c" stroke-width="1.0"/><polyline points="1014.3,367.5 1013.3,372.5" fill="none" stroke="#d6a08c" stroke-width="1.0"/><polyline points="1031.4,371.4 1030.4,376.4" fill="none" stroke="#d6a08c" stroke-width="1.0"/><polyline points="942.0,370.5 998.2,390.7" fill="none" stroke="#d6a08c" stroke-width="1.1"/><polyline points="956.9,370.9 1014.2,387.9" fill="none" stroke="#d6a08c" stroke-width="1.1"/><polyline points="962.8,379.6 1002.1,370.1" fill="none" stroke="#d6a08c" stroke-width="1.1"/><polyline points="968.8,368.2 1029.4,383.8" fill="none" stroke="#d6a08c" stroke-width="1.1"/><polyline points="980.6,385.7 1023.2,374.7" fill="none" stroke="#d6a08c" stroke-width="1.1"/><polyline points="944.0,404.5 984.9,392.7 999.0,392.2 1026.3,382.9 1053.5,376.0 1079.0,376.0 1136.2,388.0 1120.0,394.8 1103.0,400.0 1084.2,405.0 1065.5,411.0 1040.0,403.3 1016.0,396.5 988.8,403.3 970.0,408.4 960.4,411.2 944.0,404.5" fill="none" stroke="#d6a08c" stroke-width="1.2"/><polyline points="1026.3,382.9 1051.8,388.8 1079.1,394.8 1103.0,399.9" fill="none" stroke="#d6a08c" stroke-width="1.1"/><polyline points="1053.5,376.0 1065.5,381.2 1089.4,387.1 1120.0,394.8" fill="none" stroke="#d6a08c" stroke-width="1.1"/><polyline points="1028.0,388.8 1051.8,388.8 1065.5,381.2 1077.4,376.0" fill="none" stroke="#d6a08c" stroke-width="1.1"/><polyline points="1039.9,403.3 1055.3,398.2 1079.1,394.8 1089.4,387.1 1103.0,382.0" fill="none" stroke="#d6a08c" stroke-width="1.1"/><polyline points="1065.5,411.0 1082.5,405.0 1103.0,399.9" fill="none" stroke="#d6a08c" stroke-width="1.1"/><polyline points="999.0,392.2 1028.0,388.8 1055.3,398.2" fill="none" stroke="#d6a08c" stroke-width="1.1"/><polyline points="988.8,403.3 1016.0,396.5" fill="none" stroke="#d6a08c" stroke-width="1.1"/><polyline points="970.0,403.3 999.0,396.8 1028.0,388.8" fill="none" stroke="#d6a08c" stroke-width="1.1"/><polyline points="944.0,404.5 960.4,411.2" fill="none" stroke="#d6a08c" stroke-width="1.1"/><polyline points="952.0,408.0 992.0,397.5 999.0,392.2" fill="none" stroke="#d6a08c" stroke-width="1.1"/><polyline points="938.4,422.4 945.0,425.5 960.4,421.4 970.0,418.7 988.8,412.7 1016.0,405.9 1040.0,414.4 1065.5,422.9 1086.0,415.3 1103.8,405.0 1120.9,397.3 1136.2,388.0" fill="none" stroke="#4a5452" stroke-width="0.8"/><polyline points="938.4,405.3 938.4,422.4" fill="none" stroke="#d6a08c" stroke-width="1.2"/><polyline points="948.3,409.0 948.3,425.0" fill="none" stroke="#d6a08c" stroke-width="1.2"/><polyline points="960.4,411.2 960.4,421.4" fill="none" stroke="#d6a08c" stroke-width="1.2"/><polyline points="988.8,403.3 988.8,412.7" fill="none" stroke="#d6a08c" stroke-width="1.2"/><polyline points="1016.0,396.5 1016.0,405.9" fill="none" stroke="#d6a08c" stroke-width="1.2"/><polyline points="1040.0,403.3 1040.0,414.4" fill="none" stroke="#d6a08c" stroke-width="1.2"/><polyline points="1065.5,411.0 1065.5,422.9" fill="none" stroke="#d6a08c" stroke-width="1.2"/><polyline points="1084.2,405.0 1086.0,415.3" fill="none" stroke="#d6a08c" stroke-width="1.2"/><polyline points="1103.0,400.0 1103.8,405.0" fill="none" stroke="#d6a08c" stroke-width="1.2"/><polyline points="1120.0,394.8 1120.9,397.3" fill="none" stroke="#d6a08c" stroke-width="1.2"/><polyline points="1138.3,428.9 1164.0,436.0" fill="none" stroke="#d6a08c" stroke-width="1.1"/><polyline points="1138.3,428.9 1134.8,449.7 1164.0,460.8" fill="none" stroke="#d6a08c" stroke-width="1.1"/><polyline points="1138.3,428.9 1164.0,419.0" fill="none" stroke="#d6a08c" stroke-width="1.0"/><polyline points="1141.0,429.0 1164.0,420.5" fill="none" stroke="#5a4a50" stroke-width="1.5" opacity="0.7"/><polyline points="1136.2,388.0 1163.9,393.9" fill="none" stroke="#d6a08c" stroke-width="1.2"/><polyline points="1120.9,397.3 1163.9,405.0" fill="none" stroke="#d6a08c" stroke-width="1.2"/><polyline points="1103.8,405.0 1140.5,413.5 1163.9,418.7" fill="none" stroke="#d6a08c" stroke-width="1.2"/><polyline points="1085.9,415.3 1120.9,425.5 1138.8,428.9" fill="none" stroke="#d6a08c" stroke-width="1.2"/><polyline points="1065.5,422.9 1097.9,436.6 1136.2,447.6" fill="none" stroke="#d6a08c" stroke-width="1.2"/><polyline points="1163.9,398.2 1140.5,413.5 1120.9,425.5 1097.9,436.6" fill="none" stroke="#d6a08c" stroke-width="1.2"/><polyline points="1163.9,388.8 1148.2,396.5" fill="none" stroke="#d6a08c" stroke-width="1.2"/><polyline points="1101.3,532.4 1140.5,534.1 1163.9,525.6" fill="none" stroke="#d6a08c" stroke-width="1.0" opacity="0.9"/><polyline points="1101.3,532.4 1103.0,549.4 1116.6,555.4 1163.9,554.6" fill="none" stroke="#d6a08c" stroke-width="1.0" opacity="0.9"/><polyline points="1065.5,554.6 1103.0,549.4" fill="none" stroke="#d6a08c" stroke-width="1.0" opacity="0.9"/><polyline points="1089.4,566.5 1116.6,555.4 1140.5,534.1 1163.9,517.1" fill="none" stroke="#d6a08c" stroke-width="1.0" opacity="0.9"/><polyline points="1092.8,546.0 1101.3,532.4" fill="none" stroke="#d6a08c" stroke-width="1.0" opacity="0.9"/><polyline points="1055.3,551.2 1111.5,581.8 1163.9,547.7" fill="none" stroke="#5a4a50" stroke-width="0.8" opacity="0.7"/><polyline points="1058.7,548.6 1112.4,578.8 1163.9,544.7" fill="none" stroke="#d6a08c" stroke-width="1.0" opacity="0.9"/><polyline points="1054.4,549.4 1163.9,499.1" fill="none" stroke="#5a4a50" stroke-width="0.8" opacity="0.6"/><polyline points="1062.1,552.9 1099.6,530.7" fill="none" stroke="#7f8f8c" stroke-width="1.6"/><polyline points="1110.7,592.1 1110.7,585.3" fill="none" stroke="#d6a08c" stroke-width="1.0"/><polyline points="1110.7,592.0 1164.0,551.0" fill="none" stroke="#d6a08c" stroke-width="1.0"/><polyline points="778.0,343.8 790.1,339.7" fill="none" stroke="#d6a08c" stroke-width="1.0" opacity="0.85"/><polyline points="778.5,346.8 792.2,344.6" fill="none" stroke="#d6a08c" stroke-width="1.0" opacity="0.85"/><polyline points="779.0,349.7 794.3,349.5" fill="none" stroke="#d6a08c" stroke-width="1.0" opacity="0.85"/><polyline points="783.0,338.0 788.0,353.5" fill="none" stroke="#d6a08c" stroke-width="1.0" opacity="0.85"/><polyline points="777.6,340.8 788.0,334.8" fill="none" stroke="#d6a08c" stroke-width="1.0"/><polyline points="779.4,352.7 796.4,354.4" fill="none" stroke="#d6a08c" stroke-width="1.0"/><polyline points="661.0,352.5 786.5,338.2" fill="none" stroke="#d6a08c" stroke-width="1.0" opacity="0.8"/><polyline points="661.0,354.5 684.0,351.5 777.6,339.4" fill="none" stroke="#d6a08c" stroke-width="1.0" opacity="0.8"/><polyline points="661.0,358.5 711.6,365.3" fill="none" stroke="#d6a08c" stroke-width="1.0" opacity="0.85"/><polyline points="661.0,361.5 701.0,369.5" fill="none" stroke="#d6a08c" stroke-width="1.0" opacity="0.85"/><polyline points="661.0,365.3 690.7,373.9" fill="none" stroke="#d6a08c" stroke-width="1.0" opacity="0.85"/><polyline points="700.0,371.0 797.0,358.3" fill="none" stroke="#d6a08c" stroke-width="1.0" opacity="0.85"/><polyline points="690.7,373.9 797.4,361.0" fill="none" stroke="#d6a08c" stroke-width="1.0" opacity="0.85"/><polyline points="711.6,365.0 776.7,354.2 796.4,355.5" fill="none" stroke="#d6a08c" stroke-width="1.0" opacity="0.85"/><polyline points="661.0,381.0 718.0,371.0" fill="none" stroke="#d6a08c" stroke-width="1.0" opacity="0.85"/><polyline points="661.0,384.5 718.0,373.2" fill="none" stroke="#d6a08c" stroke-width="1.0" opacity="0.85"/><polyline points="661.0,388.5 730.0,377.0" fill="none" stroke="#d6a08c" stroke-width="1.0" opacity="0.85"/><polyline points="661.0,391.5 780.0,371.5" fill="none" stroke="#d6a08c" stroke-width="1.0" opacity="0.85"/><polyline points="661.0,370.2 684.6,373.9 716.5,376.3" fill="none" stroke="#d6a08c" stroke-width="1.0" opacity="0.85"/><polyline points="661.0,374.0 700.0,376.5" fill="none" stroke="#d6a08c" stroke-width="1.0" opacity="0.8"/><polyline points="661.0,377.5 690.0,378.5" fill="none" stroke="#d6a08c" stroke-width="1.0" opacity="0.8"/><polyline points="675.0,375.0 671.0,380.0" fill="none" stroke="#d6a08c" stroke-width="0.9" opacity="0.7"/><polyline points="690.0,375.0 686.0,380.0" fill="none" stroke="#d6a08c" stroke-width="0.9" opacity="0.7"/><polyline points="705.0,375.0 701.0,380.0" fill="none" stroke="#d6a08c" stroke-width="0.9" opacity="0.7"/><polyline points="672.0,357.5 669.0,365.0" fill="none" stroke="#d6a08c" stroke-width="0.9" opacity="0.7"/><polyline points="684.0,357.5 681.0,365.0" fill="none" stroke="#d6a08c" stroke-width="0.9" opacity="0.7"/><polyline points="696.0,357.5 693.0,365.0" fill="none" stroke="#d6a08c" stroke-width="0.9" opacity="0.7"/></svg><!--/SCENE-->
<div class="abs" id="dbl" style="left:1005px;top:660px;font-size:12px;line-height:15px;color:#2f4f4f;white-space:nowrap;word-spacing:1.1px">Double click for fullscreen.</div>

<div class="abs btn" style="left:1017px;width:73px;border:2px solid #0078d7;line-height:19px;">Tamam</div>
<div class="abs btn" style="left:1098px;width:73px;">İptal</div>
</body>
</html>
